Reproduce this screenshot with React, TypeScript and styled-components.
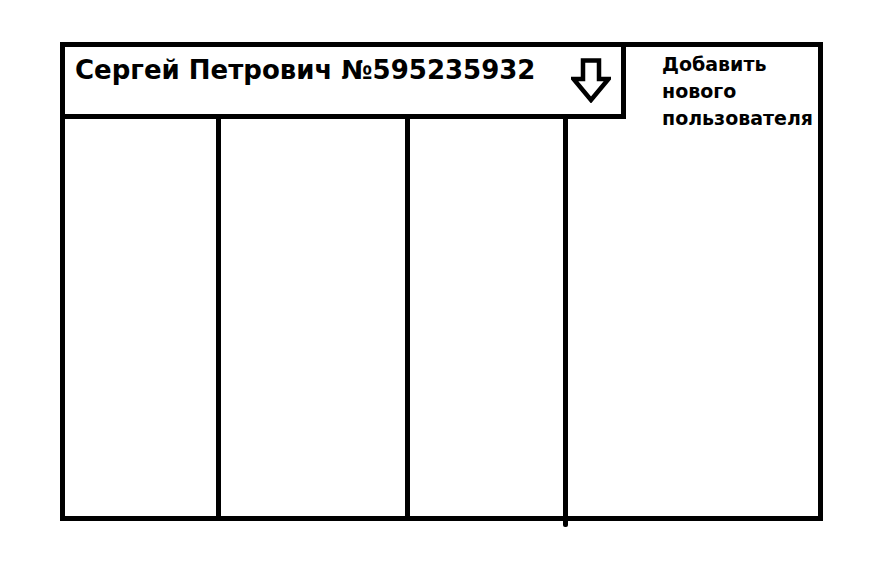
import React from "react";
import styled, { createGlobalStyle } from "styled-components";

const Global = createGlobalStyle`
  html, body { margin: 0; padding: 0; background: #fff; }
  body { font-family: "DejaVu Sans", "Liberation Sans", Arial, sans-serif; color: #000; }
`;

const Page = styled.div`
  width: 879px;
  height: 572px;
  padding: 42px 0 0 60px;
  box-sizing: border-box;
  background: #fff;
`;

const Frame = styled.div`
  width: 763px;
  height: 479px;
  border: 5px solid #000;
  box-sizing: border-box;
  display: flex;
  flex-direction: column;
`;

const TopBar = styled.div`
  display: flex;
  height: 72px;
  flex: none;
`;

const Header = styled.div`
  width: 561px;
  height: 72px;
  box-sizing: border-box;
  border-right: 5px solid #000;
  border-bottom: 5px solid #000;
  display: flex;
  align-items: flex-start;
  padding: 8px 10px 0 10px;
`;

const Title = styled.h1`
  margin: 0;
  font-family: "DejaVu Sans", "Liberation Sans", sans-serif;
  font-size: 26px;
  line-height: 30px;
  font-weight: 700;
  white-space: nowrap;
`;

const ArrowButton = styled.button`
  margin-left: auto;
  margin-top: 3px;
  padding: 0;
  border: none;
  background: none;
  width: 40px;
  height: 45px;
  display: block;
  cursor: pointer;
`;

const AddUser = styled.div`
  flex: 1;
  padding: 4px 0 0 36px;
  font-family: "DejaVu Sans", "Liberation Sans", sans-serif;
  font-size: 19px;
  line-height: 27px;
  font-weight: 700;
  position: relative;
  z-index: 1;
  height: 72px;
  box-sizing: border-box;
  overflow: visible;
  white-space: nowrap;
`;

const Columns = styled.div`
  flex: 1;
  display: flex;
`;

const Column = styled.div<{ $w?: number; $divider?: boolean; $tail?: boolean }>`
  ${(p) => (p.$w ? `width: ${p.$w}px; flex: none;` : "flex: 1;")}
  ${(p) => (p.$divider ? "border-right: 5px solid #000;" : "")}
  position: relative;
  ${(p) =>
    p.$tail
      ? `&::after {
    content: "";
    position: absolute;
    right: -5px;
    bottom: -11px;
    width: 5px;
    height: 11px;
    background: #000;
    border-radius: 0 0 2px 2px;
  }`
      : ""}
`;

const DownArrow = () => (
  <svg width="40" height="45" viewBox="0 0 40 45">
    <path
      d="M12 2.5 H28 V21 H37.5 L20 42 L2.5 21 H12 Z"
      fill="none"
      stroke="#000"
      strokeWidth="4.5"
      strokeLinejoin="miter"
    />
  </svg>
);

export default function App() {
  return (
    <>
      <Global />
      <Page>
        <Frame>
          <TopBar>
            <Header>
              <Title>Сергей Петрович №595235932</Title>
              <ArrowButton aria-label="Раскрыть">
                <DownArrow />
              </ArrowButton>
            </Header>
            <AddUser>
              Добавить
              <br />
              нового
              <br />
              пользователя
            </AddUser>
          </TopBar>
          <Columns>
            <Column $w={151} $divider />
            <Column $w={184} $divider />
            <Column $w={153} $divider $tail />
            <Column />
          </Columns>
        </Frame>
      </Page>
    </>
  );
}
